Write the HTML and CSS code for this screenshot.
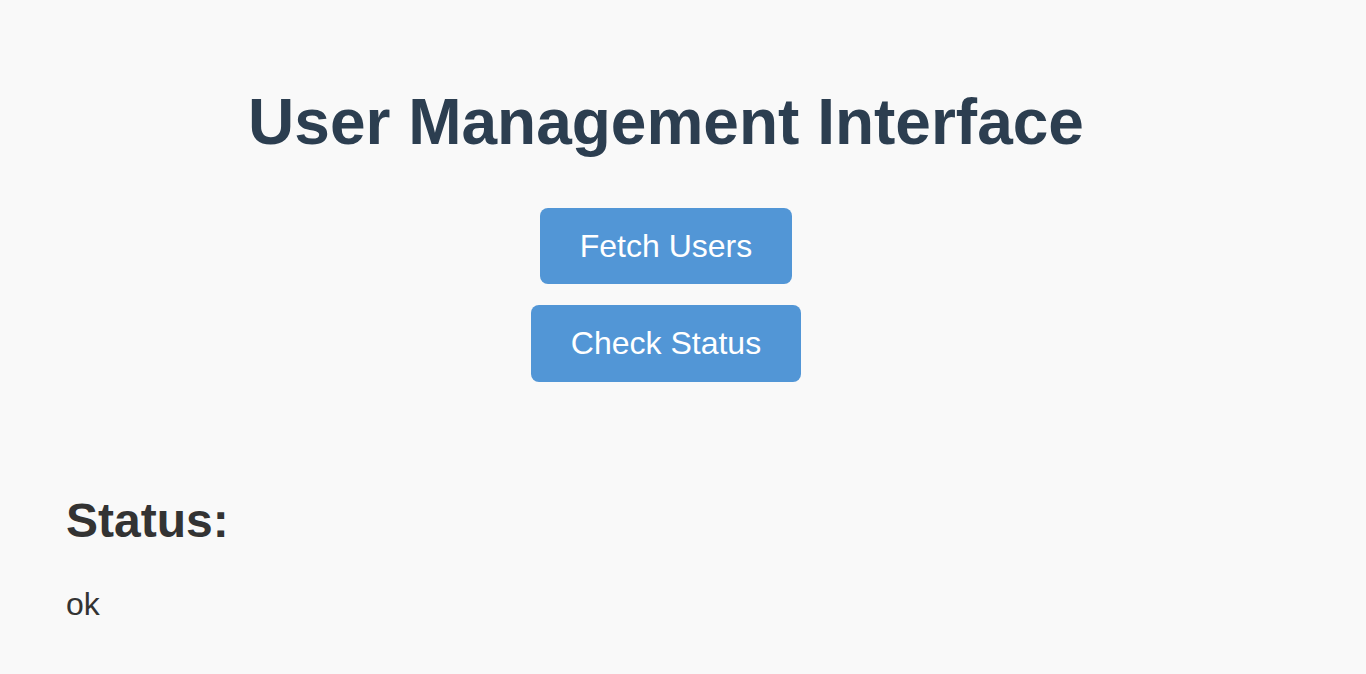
FILE: index.html
```html
<!DOCTYPE html>
<html lang="en">
<head>
<meta charset="utf-8">
<title>User Management Interface</title>
<link rel="stylesheet" href="styles.css">
</head>
<body>
<div class="page">
  <h1 class="title">User Management Interface</h1>
  <div class="actions">
    <button class="btn">Fetch Users</button>
    <button class="btn">Check Status</button>
  </div>
  <section class="status">
    <h2 class="status-title">Status:</h2>
    <p class="status-value">ok</p>
  </section>
</div>
</body>
</html>
```
FILE: styles.css
```css
html, body {
  margin: 0;
  padding: 0;
}
body {
  background: #f9f9f9;
  font-family: "Liberation Sans", Arial, Helvetica, sans-serif;
  color: #333333;
}
.page {
  max-width: 1200px;
  padding: 86px 66px 0 66px;
  display: flex;
  flex-direction: column;
}
.title {
  margin: 0;
  font-size: 64px;
  font-weight: 700;
  line-height: 73.6px;
  color: #2c3e50;
  text-align: center;
}
.actions {
  margin-top: 48px;
  display: flex;
  flex-direction: column;
  align-items: center;
  gap: 21px;
}
.btn {
  font-family: "Liberation Sans", Arial, Helvetica, sans-serif;
  font-size: 32px;
  line-height: 36.8px;
  padding: 20px 40px;
  background: #5296d6;
  color: #ffffff;
  border: none;
  border-radius: 8px;
  cursor: pointer;
}
.status {
  margin-top: 111px;
  display: flex;
  flex-direction: column;
}
.status-title {
  margin: 0;
  font-size: 48px;
  font-weight: 700;
  line-height: 55.2px;
  color: #333333;
}
.status-value {
  margin: 38px 0 0 0;
  font-size: 32px;
  line-height: 36.8px;
  color: #333333;
}
```
